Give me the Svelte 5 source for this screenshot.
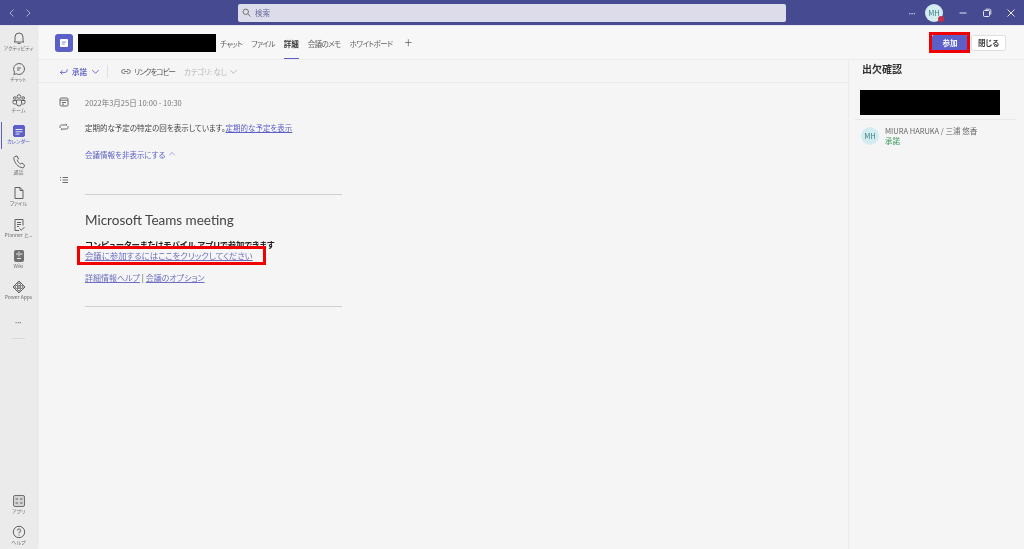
<script>
  const tabs = [
    { label: 'チャット' },
    { label: 'ファイル' },
    { label: '詳細', active: true },
    { label: '会議のメモ' },
    { label: 'ホワイトボード' }
  ];
</script>

<div class="app">
  <header class="topbar">
    <div class="nav">
      <svg viewBox="0 0 10 10" width="10" height="10"><path d="M6.500 1.500 3 5l3.500 3.500" /></svg>
      <svg viewBox="0 0 10 10" width="10" height="10"><path d="M3.500 1.500 7 5 3.500 8.500" /></svg>
    </div>
    <div class="search">
      <svg viewBox="0 0 10 10" width="9" height="9"><circle cx="4.200" cy="4.200" r="3" /><path d="m6.500 6.500 3 3" /></svg>
      <span>検索</span>
    </div>
    <div class="win-tools">
      <span class="more">•••</span>
      <span class="me">MH<i></i></span>
      <svg viewBox="0 0 10 10" width="10" height="10"><path d="M1.500 5h7" /></svg>
      <svg viewBox="0 0 10 10" width="10" height="10"><rect x="1.500" y="2.500" width="6" height="6" rx="1" /><path d="M3.500 1.200h4a1.300 1.300 0 0 1 1.300 1.300v4" /></svg>
      <svg viewBox="0 0 10 10" width="10" height="10"><path d="m1.500 1.500 7 7m0-7-7 7" /></svg>
    </div>
  </header>

  <div class="body">
    <nav class="rail">
      <div class="rail-group">
        <div class="rail-item">
          <svg viewBox="0 0 14 14"><path d="M3 10V6a4 4 0 0 1 8 0v4l1 1H2zM5.500 12.500h3" /></svg>
          <span>アクティビティ</span>
        </div>
        <div class="rail-item">
          <svg viewBox="0 0 14 14"><path d="M7 1.500a5.500 5.500 0 1 1-2.700 10.300L1.800 12.500l.7-2.400A5.500 5.500 0 0 1 7 1.500zM5 6h4M5 8h2.500" /></svg>
          <span>チャット</span>
        </div>
        <div class="rail-item">
          <svg viewBox="0 0 14 14"><circle cx="7" cy="3.500" r="1.800" /><circle cx="2.800" cy="5" r="1.300" /><circle cx="11.200" cy="5" r="1.300" /><path d="M4.500 7h5v3.500a2.500 2.500 0 0 1-5 0zM4 11H2.500a1.500 1.500 0 0 1-1.500-1.500V7.500h3M10 11h1.500A1.500 1.500 0 0 0 13 9.500V7.500h-3" /></svg>
          <span>チーム</span>
        </div>
        <div class="rail-item active">
          <svg viewBox="0 0 14 14"><rect x="1.500" y="1.500" width="11" height="11" rx="1.500" class="fill" /><path d="M3.500 5.500h7M3.500 7.800h7M3.500 10h4" class="cut" /></svg>
          <span>カレンダー</span>
        </div>
        <div class="rail-item">
          <svg viewBox="0 0 14 14"><path d="M3 1.500 5 1l1.500 3-1.200 1.200c.4 1.500 1.800 3.200 3.300 3.800L10 8l2.500 2-.5 2c-.3.700-1 1-1.800.8C6 12 2.500 8 1.800 3.500 1.700 2.500 2.200 1.800 3 1.500z" /></svg>
          <span>通話</span>
        </div>
        <div class="rail-item">
          <svg viewBox="0 0 14 14"><path d="M3 1.500h5l3 3v8H3zM8 1.500v3h3" /></svg>
          <span>ファイル</span>
        </div>
        <div class="rail-item">
          <svg viewBox="0 0 14 14"><path d="M3 1.500h8v6M7 12.500H3v-11M5 4.500h4M5 6.500h4M5 8.500h2M7.500 10.500l1.800 1.800 3.200-3.300" /></svg>
          <span>Planner と...</span>
        </div>
        <div class="rail-item">
          <svg viewBox="0 0 14 14"><rect x="2.500" y="1.500" width="9" height="11" rx="1" class="fill grey" /><path d="M7 2.500v5M4 5h2M8 5h2.500M5 9.500h4" class="cut" /></svg>
          <span>Wiki</span>
        </div>
        <div class="rail-item">
          <svg viewBox="0 0 14 14"><path d="M7 1 13 7 7 13 1 7z" /><circle cx="7" cy="4.500" r="1.500" /><circle cx="7" cy="9.500" r="1.500" /><circle cx="4.500" cy="7" r="1.500" /><circle cx="9.500" cy="7" r="1.500" /></svg>
          <span>Power Apps</span>
        </div>
        <div class="rail-dots">•••</div>
        <div class="rail-rule"></div>
      </div>
      <div class="rail-group">
        <div class="rail-item">
          <svg viewBox="0 0 14 14"><rect x="1.500" y="1.500" width="11" height="11" rx="1.500" class="fill light" /><path d="M3.500 5h2.500M8 5h2.500M3.500 9h2.500M8 9h2.500" /></svg>
          <span>アプリ</span>
        </div>
        <div class="rail-item">
          <svg viewBox="0 0 14 14"><circle cx="7" cy="7" r="5.700" /><path d="M5.300 5.500A1.700 1.700 0 1 1 7 7.300v1M7 9.600v1" /></svg>
          <span>ヘルプ</span>
        </div>
      </div>
    </nav>

    <main class="main">
      <div class="head">
        <div class="event-icon">
          <svg viewBox="0 0 10 10" width="10" height="10"><rect x="1" y="1" width="8" height="8" rx="1" /><path d="M2.800 4h4.400M2.800 6h3" /></svg>
        </div>
        <div class="redact title-redact"></div>
        <div class="tabs">
          {#each tabs as tab}
            <span class="tab" class:on={tab.active}>{tab.label}</span>
          {/each}
          <span class="plus">+</span>
        </div>
        <div class="actions">
          <button class="join">参加</button>
          <button class="close">閉じる</button>
        </div>
      </div>

      <div class="content">
        <section class="details">
          <div class="toolbar">
            <span class="accept">
              <svg viewBox="0 0 10 10" width="9" height="9"><path d="M9 2.500v1.500a2 2 0 0 1-2 2H1.500M3.800 3.800 1.500 6l2.300 2.200" /></svg>
              承諾
              <svg viewBox="0 0 10 10" width="9" height="9"><path d="m1.500 3.500 3.500 3.500 3.500-3.500" /></svg>
            </span>
            <span class="tool-rule"></span>
            <span class="copy">
              <svg viewBox="0 0 12 10" width="10" height="9"><path d="M5 2.800H3a2.200 2.200 0 0 0 0 4.400h2M7 2.800h2a2.200 2.200 0 0 1 0 4.400H7M4 5h4" /></svg>
              リンクをコピー
            </span>
            <span class="category">
              カテゴリ: なし
              <svg viewBox="0 0 10 10" width="9" height="9"><path d="m1.500 3.500 3.500 3.500 3.500-3.500" /></svg>
            </span>
          </div>

          <div class="info">
            <div class="row date">
              <svg viewBox="0 0 10 10" width="10" height="10"><rect x="1" y="1" width="8" height="8" rx="1.200" /><path d="M1 3.200h8M3 5.500h4M3 7.200h2" /></svg>
              <span>2022年3月25日 10:00 - 10:30</span>
            </div>
            <div class="row repeat">
              <svg viewBox="0 0 10 10" width="10" height="10"><path d="M1 6V4.500A1.500 1.500 0 0 1 2.500 3H8L6.800 1.800M9 4v1.500A1.500 1.500 0 0 1 7.500 7H2l1.200 1.200" /></svg>
              <span>定期的な予定の特定の回を表示しています。<u>定期的な予定を表示</u></span>
            </div>
            <div class="row toggle">
              <span>会議情報を非表示にする</span>
              <svg viewBox="0 0 10 10" width="8" height="8"><path d="m1.500 6.500 3.500-3.500 3.500 3.500" /></svg>
            </div>
            <div class="row notes">
              <svg viewBox="0 0 10 10" width="10" height="10"><path d="M1 2.500h1M3.500 2.500H9M1 5h1M3.500 5H9M3.500 7.500H9" /></svg>
            </div>

            <div class="invite">
              <h2>Microsoft Teams meeting</h2>
              <p class="lead">コンピューターまたはモバイル アプリで参加できます</p>
              <p class="join-link"><u>会議に参加するにはここをクリックしてください</u></p>
              <p class="help"><u>詳細情報ヘルプ</u> | <u>会議のオプション</u></p>
            </div>
          </div>
        </section>

        <aside class="attendance">
          <h3>出欠確認</h3>
          <div class="redact attend-redact"></div>
          <div class="person">
            <span class="avatar">MH</span>
            <div>
              <div class="name">MIURA HARUKA / 三浦 悠香</div>
              <div class="status">承諾</div>
            </div>
          </div>
        </aside>
      </div>
    </main>
  </div>

  <div class="mark mark-join"></div>
  <div class="mark mark-link"></div>
</div>

<style>
  :global(body) {
    margin: 0;
  }

  .app {
    position: relative;
    width: 1024px;
    height: 549px;
    overflow: hidden;
    display: flex;
    flex-direction: column;
    background: #f5f5f5;
    color: #424242;
    font-family: "Noto Sans CJK JP", "Noto Sans", sans-serif;
    font-size: 7.5px;
    font-feature-settings: "palt";
    filter: blur(0.4px);
  }

  svg {
    fill: none;
    stroke: currentColor;
    stroke-width: 1;
    flex: none;
  }

  u {
    text-underline-offset: 1px;
  }

  .topbar {
    height: 26px;
    flex: none;
    display: flex;
    align-items: center;
    background: #464a90;
    color: #d9d9ee;
    border-bottom: 1px solid #e8e8f0;
    box-sizing: border-box;
  }

  .nav {
    width: 238px;
    flex: none;
    display: flex;
    gap: 6px;
    padding-left: 7px;
    box-sizing: border-box;
    color: #a9abd3;
  }

  .search {
    width: 548px;
    height: 18px;
    flex: none;
    display: flex;
    align-items: center;
    gap: 4px;
    padding-left: 4px;
    box-sizing: border-box;
    border-radius: 2px;
    background: #dcdcea;
    color: #6a6d9e;
  }

  .search svg {
    color: #666;
  }

  .win-tools {
    flex: 1;
    display: flex;
    align-items: center;
    padding-left: 123px;
    color: #e6e6f4;
  }

  .more {
    font-size: 5px;
    letter-spacing: 0.5px;
    width: 16px;
    flex: none;
  }

  .me {
    position: relative;
    width: 18px;
    height: 18px;
    flex: none;
    border-radius: 50%;
    background: #d3ecf0;
    color: #3c7f85;
    font-size: 7.5px;
    line-height: 18px;
    text-align: center;
    margin-right: 15px;
  }

  .me i {
    position: absolute;
    right: -1px;
    bottom: 0;
    width: 6px;
    height: 6px;
    border-radius: 50%;
    background: #c4314b;
  }

  .win-tools svg {
    margin-right: 14px;
  }

  .body {
    flex: 1;
    min-height: 0;
    display: flex;
  }

  .rail {
    width: 37px;
    flex: none;
    display: flex;
    flex-direction: column;
    justify-content: space-between;
    background: #ebebeb;
    box-shadow: 1px 0 2px rgba(0, 0, 0, 0.08);
    padding-top: 5px;
    box-sizing: border-box;
    z-index: 1;
  }

  .rail-group {
    display: flex;
    flex-direction: column;
    gap: 7.100px;
  }

  .rail-item {
    position: relative;
    height: 24px;
    display: flex;
    flex-direction: column;
    align-items: center;
    color: #616161;
  }

  .rail-item svg {
    width: 14px;
    height: 14px;
  }

  .rail-item span {
    font-size: 5px;
    line-height: 8px;
    margin-top: -1px;
    white-space: nowrap;
    color: #707070;
  }

  .rail-item.active,
  .rail-item.active span {
    color: #5b5fc7;
  }

  .rail-item.active::before {
    content: "";
    position: absolute;
    left: 1px;
    top: -2px;
    bottom: -1px;
    width: 1px;
    background: #5b5fc7;
  }

  .fill {
    fill: currentColor;
  }

  .fill.grey {
    fill: #707070;
    stroke: #707070;
  }

  .fill.light {
    fill: #d4d4d4;
    stroke: #707070;
  }

  .cut {
    stroke: #ebebeb;
  }

  .rail-dots {
    text-align: center;
    font-size: 5px;
    letter-spacing: 0.5px;
    color: #707070;
    margin-top: 7px;
  }

  .rail-rule {
    height: 1px;
    margin: 6px 12px 0;
    background: #d8d8d8;
  }

  .main {
    flex: 1;
    min-width: 0;
    display: flex;
    flex-direction: column;
  }

  .head {
    height: 34px;
    flex: none;
    display: flex;
    align-items: center;
    padding-left: 18px;
    padding-right: 18px;
    box-sizing: border-box;
    border-bottom: 1px solid #ececec;
    background: #f7f7f7;
  }

  .event-icon {
    width: 18px;
    height: 18px;
    border-radius: 3px;
    background: #5b5fc7;
    color: #fff;
    display: flex;
    align-items: center;
    justify-content: center;
    margin-right: 5px;
  }

  .event-icon rect {
    fill: #fff;
    stroke: none;
  }

  .event-icon path {
    stroke: #5b5fc7;
    stroke-width: 0.7;
  }

  .redact {
    background: #000;
    flex: none;
  }

  .title-redact {
    width: 138px;
    height: 18px;
    margin-right: 4px;
  }

  .tabs {
    height: 100%;
    display: flex;
    align-items: center;
    gap: 9px;
    color: #616161;
  }

  .tab {
    height: 100%;
    line-height: 36px;
    box-sizing: border-box;
    white-space: nowrap;
    letter-spacing: -0.6px;
  }

  .tab.on {
    color: #333;
    font-weight: 700;
    letter-spacing: 0;
    border-bottom: 1px solid #5b5fc7;
  }

  .plus {
    font-size: 14px;
    font-weight: 300;
    margin-left: 3px;
    margin-top: -1px;
  }

  .actions {
    margin-left: auto;
    display: flex;
    align-items: center;
    gap: 3px;
  }

  button {
    font: inherit;
    font-feature-settings: inherit;
    height: 16px;
    padding: 0;
    border-radius: 2px;
    font-weight: 700;
  }

  .join {
    width: 36px;
    background: #5b5fc7;
    color: #fff;
    border: 0;
  }

  .close {
    width: 35px;
    background: #fff;
    border: 1px solid #e0e0e0;
    color: #424242;
  }

  .content {
    flex: 1;
    min-height: 0;
    display: flex;
  }

  .details {
    flex: 1;
    min-width: 0;
  }

  .toolbar {
    height: 23px;
    display: flex;
    align-items: center;
    box-sizing: border-box;
    padding-left: 22px;
    border-bottom: 1px solid #ebebeb;
  }

  .accept {
    display: flex;
    align-items: center;
    gap: 4px;
    color: #5b5fc7;
    font-weight: 500;
  }

  .tool-rule {
    width: 1px;
    height: 13px;
    background: #e0e0e0;
    margin: 0 13px 0 7px;
  }

  .copy {
    display: flex;
    align-items: center;
    gap: 3px;
    color: #555;
    margin-right: 9px;
    letter-spacing: -1px;
  }

  .category {
    display: flex;
    align-items: center;
    gap: 2px;
    color: #b5b5b5;
    letter-spacing: -0.2px;
  }

  .info {
    padding: 11px 0 0 22px;
  }

  .row {
    position: relative;
    height: 16px;
    display: flex;
    align-items: center;
    padding-left: 26px;
  }

  .row > svg:first-child {
    position: absolute;
    left: 0;
    color: #6b6b6b;
  }

  .date {
    color: #777;
    margin-bottom: 9px;
  }

  .repeat {
    margin-bottom: 11px;
    color: #444;
  }

  .repeat u {
    color: #5b5fc7;
  }

  .toggle {
    color: #5b5fc7;
    gap: 3px;
    margin-bottom: 13px;
  }

  .toggle svg {
    position: static !important;
    color: #8f91d8 !important;
  }

  .notes {
    height: 10px;
  }

  .invite {
    width: 257px;
    margin-left: 26px;
    margin-top: 9px;
    height: 113px;
    box-sizing: border-box;
    border-top: 1px solid #d0d0d0;
    border-bottom: 1px solid #d0d0d0;
  }

  h2 {
    margin: 15px 0 0;
    font-family: "Lato", "Noto Sans", sans-serif;
    font-size: 13.500px;
    line-height: 20px;
    font-weight: 400;
    color: #444;
  }

  p {
    margin: 0;
    line-height: 11px;
    font-size: 8.400px;
  }

  .lead {
    margin-top: 9px;
    color: #242424;
    font-weight: 700;
  }

  .join-link {
    color: #6c6fc0;
  }

  .help {
    margin-top: 11px;
    font-size: 8px;
    color: #555;
  }

  .help u {
    color: #6c6fc0;
  }

  .attendance {
    width: 176px;
    flex: none;
    box-sizing: border-box;
    border-left: 1px solid #ebebeb;
    padding: 2px 8px 0 6px;
  }

  h3 {
    margin: 0;
    padding-left: 7px;
    font-size: 10px;
    line-height: 14px;
    font-weight: 700;
    color: #333;
  }

  .attend-redact {
    width: 140px;
    height: 25px;
    margin: 14px 0 4px 5px;
  }

  .person {
    display: flex;
    align-items: center;
    gap: 6px;
    padding: 6px 0 0 6px;
    border-top: 1px solid #e8e8e8;
  }

  .avatar {
    width: 18px;
    height: 18px;
    border-radius: 50%;
    background: #d3ecf0;
    color: #3c7f85;
    font-size: 7.5px;
    line-height: 18px;
    text-align: center;
    flex: none;
  }

  .name {
    line-height: 10px;
    color: #666;
    white-space: nowrap;
  }

  .status {
    line-height: 10px;
    color: #3d9a5b;
  }

  .mark {
    position: absolute;
    box-sizing: border-box;
    border: 3px solid #f00000;
  }

  .mark-join {
    left: 929px;
    top: 32px;
    width: 41px;
    height: 21px;
  }

  .mark-link {
    left: 77px;
    top: 246px;
    width: 189px;
    height: 19px;
  }
</style>
